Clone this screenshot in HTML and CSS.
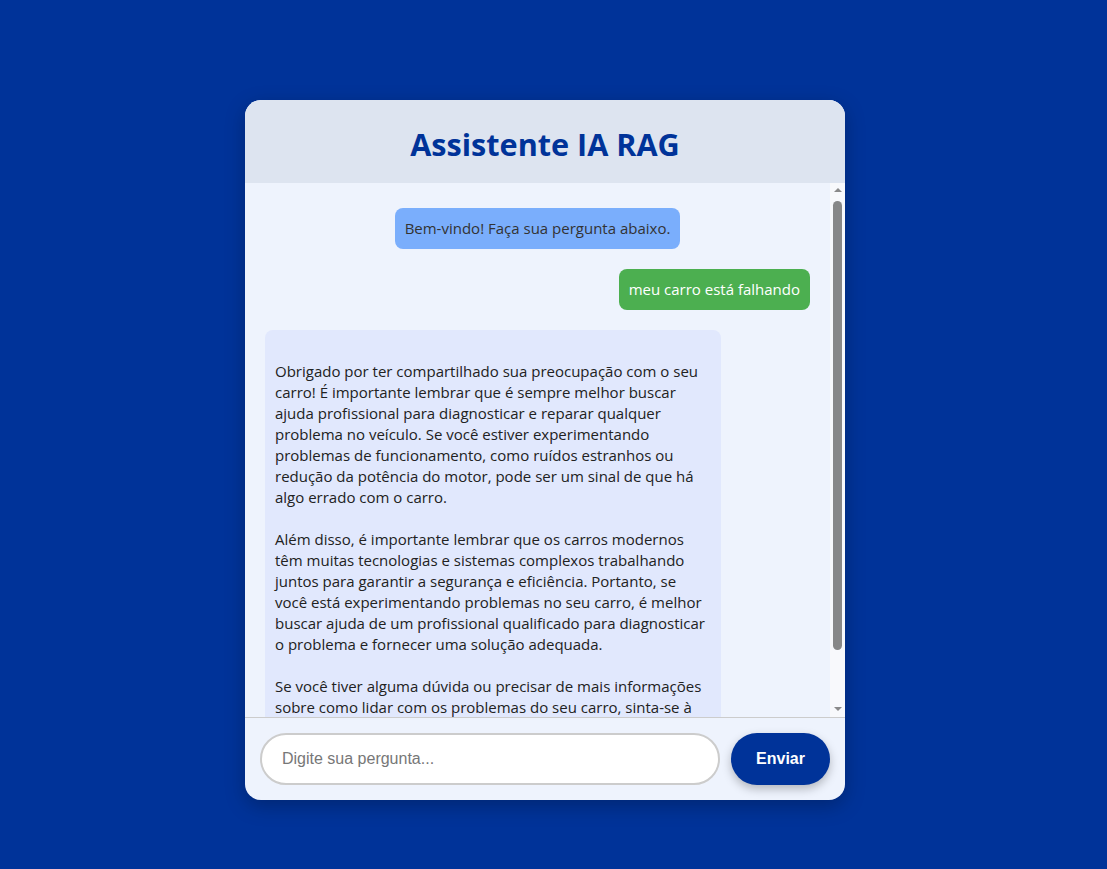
FILE: index.html
```html
<!DOCTYPE html>
<html lang="pt-BR">
<head>
<meta charset="UTF-8">
<title>Assistente IA RAG</title>
<link rel="stylesheet" href="styles.css">
</head>
<body>
<div class="card">
  <header class="card-header">
    <h1 class="title">Assistente IA RAG</h1>
  </header>
  <div class="chat-area">
    <div class="chat">
      <div class="msg msg-welcome">Bem-vindo! Faça sua pergunta abaixo.</div>
      <div class="msg msg-user">meu carro está falhando</div>
      <div class="msg msg-bot">
Obrigado por ter compartilhado sua preocupação com o seu
carro! É importante lembrar que é sempre melhor buscar
ajuda profissional para diagnosticar e reparar qualquer
problema no veículo. Se você estiver experimentando
problemas de funcionamento, como ruídos estranhos ou
redução da potência do motor, pode ser um sinal de que há
algo errado com o carro.

Além disso, é importante lembrar que os carros modernos
têm muitas tecnologias e sistemas complexos trabalhando
juntos para garantir a segurança e eficiência. Portanto, se
você está experimentando problemas no seu carro, é melhor
buscar ajuda de um profissional qualificado para diagnosticar
o problema e fornecer uma solução adequada.

Se você tiver alguma dúvida ou precisar de mais informações
sobre como lidar com os problemas do seu carro, sinta-se à
vontade para perguntar.
</div>
    </div>
    <div class="scrollbar" aria-hidden="true">
      <span class="scroll-arrow scroll-arrow-up"></span>
      <div class="scroll-track"><span class="scroll-thumb"></span></div>
      <span class="scroll-arrow scroll-arrow-down"></span>
    </div>
  </div>
  <form class="composer">
    <input class="composer-input" type="text" placeholder="Digite sua pergunta...">
    <button class="composer-send" type="button">Enviar</button>
  </form>
</div>
</body>
</html>
```

FILE: styles.css
```css
* { box-sizing: border-box; }

html, body { height: 100%; }

body {
  margin: 0;
  background: #003399;
  display: flex;
  justify-content: center;
  align-items: flex-start;
  padding: 100px 17px 0 0;
  font-family: "Open Sans", "Noto Sans", sans-serif;
}

.card {
  width: 600px;
  height: 700px;
  background: #eef3fd;
  border-radius: 16px;
  overflow: hidden;
  display: flex;
  flex-direction: column;
  box-shadow: 0 6px 20px rgba(0, 0, 0, 0.25);
}

.card-header {
  background: #dde4f0;
  height: 83px;
  display: flex;
  align-items: center;
  justify-content: center;
  flex-shrink: 0;
}

.title {
  margin: 0;
  padding-top: 4px;
  font-size: 30.6px;
  font-weight: 700;
  color: #003399;
  letter-spacing: 0;
}

.chat-area {
  flex: 1;
  min-height: 0;
  display: flex;
}

.chat {
  flex: 1;
  overflow: hidden;
  padding: 25px 20px 20px;
  display: flex;
  flex-direction: column;
  gap: 20px;
  min-height: 0;
}

.scrollbar {
  width: 15px;
  flex-shrink: 0;
  background: #f8f9fc;
  display: flex;
  flex-direction: column;
  align-items: center;
}

.scroll-arrow {
  display: block;
  width: 0;
  height: 0;
  border-left: 4px solid transparent;
  border-right: 4px solid transparent;
}

.scroll-arrow-up {
  margin: 5px 0 5px;
  border-bottom: 4px solid #8a8a8a;
}

.scroll-arrow-down {
  margin: 5px 0 6px;
  border-top: 4px solid #8a8a8a;
}

.scroll-track {
  flex: 1;
  width: 100%;
  padding: 4px 3px 0;
}

.scroll-thumb {
  display: block;
  height: 449px;
  border-radius: 5px;
  background: #888888;
}

.msg {
  font-size: 15px;
  line-height: 21px;
  padding: 10px;
  border-radius: 8px;
  flex-shrink: 0;
}

.msg-welcome {
  align-self: center;
  background: #7aaefc;
  color: #333333;
}

.msg-user {
  align-self: flex-end;
  background: #4caf50;
  color: #ffffff;
}

.msg-bot {
  align-self: flex-start;
  width: 456px;
  background: #e1e8fd;
  color: #222222;
  white-space: pre-line;
}

.composer {
  flex-shrink: 0;
  display: flex;
  gap: 11px;
  padding: 15px;
  border-top: 1px solid #cccccc;
  margin: 0;
}

.composer-input {
  flex: 1;
  height: 52px;
  border: 2px solid #cccccc;
  border-radius: 26px;
  padding: 0 20px;
  font-family: "Liberation Sans", Arial, sans-serif;
  font-size: 16px;
  background: #ffffff;
  color: #333333;
  outline: none;
}
.composer-input::placeholder { color: #777777; }

.composer-send {
  width: 99px;
  height: 52px;
  border: none;
  border-radius: 26px;
  background: #003399;
  color: #ffffff;
  font-family: "Liberation Sans", Arial, sans-serif;
  font-size: 16px;
  font-weight: 700;
  box-shadow: 0 4px 10px rgba(0, 0, 0, 0.25);
  cursor: pointer;
}
```
